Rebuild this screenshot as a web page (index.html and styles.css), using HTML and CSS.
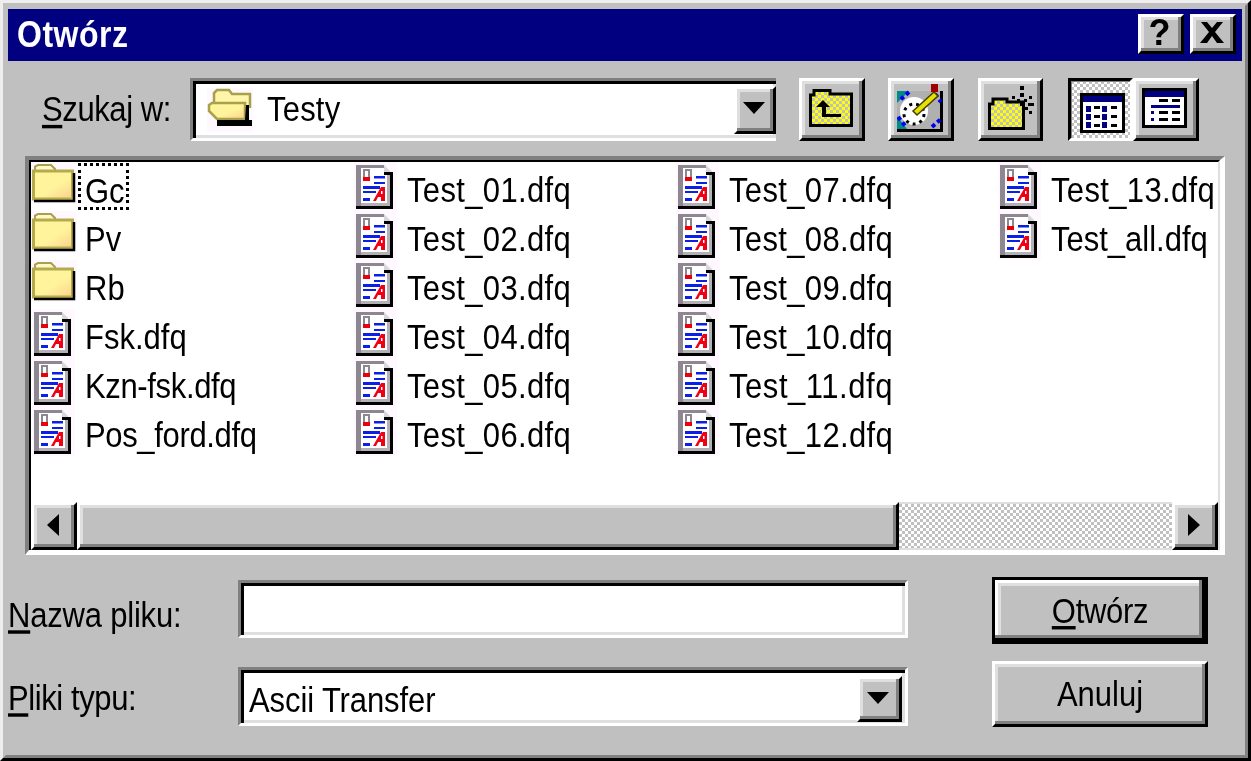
FILE: index.html
```html
<!DOCTYPE html>
<html lang="pl">
<head>
<meta charset="utf-8">
<title>Otwórz</title>
<link rel="stylesheet" href="styles.css">
</head>
<body>
<svg class="defs" width="0" height="0" aria-hidden="true">
  <defs>
    <pattern id="yel" width="6" height="6" patternUnits="userSpaceOnUse">
      <rect width="6" height="6" fill="#ffff00"/><rect width="3" height="3" fill="#c0c0c0"/><rect x="3" y="3" width="3" height="3" fill="#c0c0c0"/>
    </pattern>
    <linearGradient id="fold" x1="0.25" y1="0.15" x2="1" y2="1">
      <stop offset="0.45" stop-color="#fff49c"/><stop offset="1" stop-color="#fbcf8e"/>
    </linearGradient>
    <symbol id="folder" viewBox="0 0 54 49">
      <rect x="0" y="0" width="46" height="42" fill="#fff8ff"/>
      <path d="M4 9V4.500L7 3H20L24 7V9Z" fill="#fff8c8" stroke="#a8a04a" stroke-width="2"/>
      <rect x="2.500" y="9" width="39" height="28" fill="url(#fold)" stroke="#b3ab4e" stroke-width="3"/>
      <path d="M43 11V39H3" fill="none" stroke="#000" stroke-width="2.500"/>
    </symbol>
    <symbol id="doc" viewBox="0 0 54 49">
      <rect x="1" y="0" width="43" height="49" fill="#fff8ff"/>
      <g transform="translate(3 2)">
        <path d="M5 4H28L34 10V42H5Z" fill="#fff"/>
        <path d="M0 1H28V4H5V42H0Z" fill="#8c8790"/>
        <path d="M28 1L34 7V9H28Z" fill="#d8d8d8"/>
        <path d="M31 9H34V39H31ZM5 39H34V42H5Z" fill="#b4b0b8"/>
        <path d="M28 8H37V45H0V42H34V11H28Z" fill="#000"/>
        <rect x="7" y="5" width="7" height="12" fill="#8c8790"/>
        <rect x="9" y="7" width="3" height="6" fill="#fff"/>
        <rect x="7" y="13" width="7" height="4" fill="#e8000c"/>
        <path d="M18 12H29V14.500H18ZM18 18H29V20H18ZM7 22H24V25H7ZM7 27H20V29H7ZM7 34H14V37H7Z" fill="#0a20e8"/>
        <path d="M17 37L25 23H29V37H25V33H22L20 37Z" fill="#f00014"/>
        <rect x="25" y="27" width="1.500" height="3" fill="#fff"/>
      </g>
    </symbol>
    <g id="win-base">
      <rect x="1.500" y="1.500" width="42" height="37" fill="#fff" stroke="#000" stroke-width="3"/>
      <rect x="3" y="3" width="39" height="6" fill="#000080"/>
    </g>
  </defs>
</svg>

<div class="dialog">
  <div class="frame">
    <header class="titlebar">
      <span class="txt title">Otwórz</span>
      <div class="title-btns">
        <button class="bevel tbtn help">?</button>
        <button class="bevel tbtn">
          <svg width="24" height="21" viewBox="0 0 24 21"><path d="M1 0H7L12 6L17 0H23L15 10L24 21H17L12 14L7 21H0L9 10Z" fill="#000"/></svg>
        </button>
      </div>
    </header>

    <div class="toolbar">
      <label class="label look-label"><span class="txt raised"><u>S</u>zukaj w:</span></label>
      <div class="combo look-combo">
        <svg class="open-folder" width="46" height="44" viewBox="0 0 46 44">
          <rect width="46" height="44" fill="#fff8ff"/>
          <path d="M7 16V5L10 2H22L25 6H43V20" fill="#fff6ac" stroke="#a8a04a" stroke-width="2.500"/>
          <path d="M2 17L5 15H38V31H10L2 23Z" fill="url(#fold)" stroke="#a8a04a" stroke-width="2.500"/>
          <path d="M39 17H42V32H45V38H10V32H38Z" fill="#000"/>
        </svg>
        <span class="combo-text"><span class="txt raised">Testy</span></span>
        <button class="bevel drop"><span class="tri-down"></span></button>
      </div>

      <button class="bevel tool tool-up">
        <svg width="44" height="38" viewBox="0 0 44 38">
          <path d="M3 6H1.500V36.500H42.500V5H21V1.500H5V6Z" fill="url(#yel)" stroke="#000" stroke-width="3"/>
          <path d="M14 11L21 18H17V25H32V28H13V18H7Z" fill="#000"/>
        </svg>
      </button>
      <button class="bevel tool tool-map">
        <svg width="46" height="48" viewBox="0 0 46 48">
          <rect x="0" y="7" width="46" height="41" fill="#000"/>
          <rect x="0" y="7" width="43" height="38" fill="#b0b0b0"/>
          <path d="M0 7H12L0 19ZM0 32L10 45H0Z" fill="#008a8a"/>
          <path d="M12 8L2 17M1 33L9 43M35 43L44 35M38 10L44 18" stroke="#0000f0" stroke-width="4" stroke-dasharray="4 3"/>
          <circle cx="17" cy="27" r="14" fill="#fff"/>
          <circle cx="17" cy="30" r="10" fill="none" stroke="#000" stroke-width="3" stroke-dasharray="3 4"/>
          <path d="M16 27L37 8L41 12L20 31Z" fill="#e8e000" stroke="#404000" stroke-width="1.500"/>
          <rect x="34" y="0" width="7" height="8" fill="#a00000"/>
        </svg>
      </button>
      <button class="bevel tool tool-new">
        <svg width="46" height="44" viewBox="0 0 46 44">
          <path d="M3 18H1.500V42.500H35.500V16H19V13H5V18Z" fill="url(#yel)" stroke="#000" stroke-width="3"/>
          <path d="M32 0H36V4H32ZM32 7H36V11H32ZM24 10H27V13H24ZM41 10H44V13H41ZM29 13H32V16H29ZM36 13H39V16H36ZM32 16H36V20H32ZM40 17H46V20H40ZM37 21H40V24H37ZM41 25H44V28H41Z" fill="#000"/>
        </svg>
      </button>
      <button class="tool tool-pressed">
        <svg width="45" height="40" viewBox="0 0 45 40">
          <use href="#win-base"/>
          <path d="M6 13H11V19H6ZM22 13H27V19H22ZM6 21H11V27H6ZM22 21H27V27H22ZM6 29H11V35H6ZM22 29H27V35H22Z" fill="#000080"/>
          <path d="M14 13H20V16H14ZM31 13H37V16H31ZM14 22H20V25H14ZM31 22H37V25H31ZM14 31H20V34H14ZM31 31H37V34H31Z" fill="#000"/>
        </svg>
      </button>
      <button class="bevel tool tool-details">
        <svg width="45" height="40" viewBox="0 0 45 40">
          <use href="#win-base"/>
          <path d="M17 11H26V14H17ZM30 11H38V14H30ZM17 23H26V26H17ZM30 23H38V26H30ZM17 30H26V33H17ZM30 30H38V33H30Z" fill="#000"/>
          <path d="M9 17H38V20H9ZM9 23H12V26H9ZM9 30H12V33H9Z" fill="#000080"/>
        </svg>
      </button>
    </div>

    <div class="listbox">
      <div class="list-inner">
        <div class="files">
          <div class="item"><svg class="ico"><use href="#folder"/></svg><span class="focus"><span class="txt">Gc</span></span></div>
          <div class="item"><svg class="ico"><use href="#folder"/></svg><span class="txt">Pv</span></div>
          <div class="item"><svg class="ico"><use href="#folder"/></svg><span class="txt">Rb</span></div>
          <div class="item"><svg class="ico"><use href="#doc"/></svg><span class="txt">Fsk.dfq</span></div>
          <div class="item"><svg class="ico"><use href="#doc"/></svg><span class="txt tight">Kzn-fsk.dfq</span></div>
          <div class="item"><svg class="ico"><use href="#doc"/></svg><span class="txt tight">Pos_ford.dfq</span></div>
          <div class="item"><svg class="ico"><use href="#doc"/></svg><span class="txt wide">Test_01.dfq</span></div>
          <div class="item"><svg class="ico"><use href="#doc"/></svg><span class="txt wide">Test_02.dfq</span></div>
          <div class="item"><svg class="ico"><use href="#doc"/></svg><span class="txt wide">Test_03.dfq</span></div>
          <div class="item"><svg class="ico"><use href="#doc"/></svg><span class="txt wide">Test_04.dfq</span></div>
          <div class="item"><svg class="ico"><use href="#doc"/></svg><span class="txt wide">Test_05.dfq</span></div>
          <div class="item"><svg class="ico"><use href="#doc"/></svg><span class="txt wide">Test_06.dfq</span></div>
          <div class="item"><svg class="ico"><use href="#doc"/></svg><span class="txt wide">Test_07.dfq</span></div>
          <div class="item"><svg class="ico"><use href="#doc"/></svg><span class="txt wide">Test_08.dfq</span></div>
          <div class="item"><svg class="ico"><use href="#doc"/></svg><span class="txt wide">Test_09.dfq</span></div>
          <div class="item"><svg class="ico"><use href="#doc"/></svg><span class="txt wide">Test_10.dfq</span></div>
          <div class="item"><svg class="ico"><use href="#doc"/></svg><span class="txt wider">Test_11.dfq</span></div>
          <div class="item"><svg class="ico"><use href="#doc"/></svg><span class="txt wide">Test_12.dfq</span></div>
          <div class="item"><svg class="ico"><use href="#doc"/></svg><span class="txt wide">Test_13.dfq</span></div>
          <div class="item"><svg class="ico"><use href="#doc"/></svg><span class="txt">Test_all.dfq</span></div>
        </div>
        <div class="scrollbar">
          <button class="bevel sbtn"><span class="tri-left"></span></button>
          <div class="bevel thumb"></div>
          <div class="track"></div>
          <button class="bevel sbtn"><span class="tri-right"></span></button>
        </div>
      </div>
    </div>

    <div class="form">
      <label class="label form-label name-label"><span class="txt"><u>N</u>azwa pliku:</span></label>
      <div class="field name-field"></div>
      <button class="bevel action default"><span class="txt otw"><u>O</u>twórz</span></button>

      <label class="label form-label type-label"><span class="txt"><u>P</u>liki typu:</span></label>
      <div class="field type-field">
        <span class="txt type-text">Ascii Transfer</span>
        <button class="bevel drop type-drop"><span class="tri-down"></span></button>
      </div>
      <button class="bevel action"><span class="txt anu">Anuluj</span></button>
    </div>
  </div>
</div>
</body>
</html>
```

FILE: styles.css
```css
* { box-sizing: border-box; }
html, body { margin: 0; padding: 0; }
body {
  width: 1251px;
  height: 761px;
  overflow: hidden;
  background: #c0c0c0;
  font-family: "Liberation Sans", Arial, sans-serif;
  font-size: 31px;
  color: #000;
}
.defs { position: absolute; width: 0; height: 0; }
button {
  font: inherit;
  color: inherit;
  padding: 0;
  margin: 0;
  background: #c0c0c0;
  display: flex;
  align-items: center;
  justify-content: center;
}
u { text-decoration-thickness: 3px; text-underline-offset: 3px; }

/* upscaled bitmap font: taller than Arial metrics */
.txt {
  display: inline-block;
  padding-top: 7px;
  transform: scaleY(1.14);
  white-space: nowrap;
}
.raised { padding-top: 1px; }
.wide { letter-spacing: 0.35px; }
.wider { letter-spacing: 0.55px; }
.tight { letter-spacing: -0.35px; }

.bevel {
  border: 3px solid;
  border-color: #fff #000 #000 #fff;
  box-shadow: inset -3px -3px 0 #808080, inset 3px 3px 0 #dfdfdf;
  background: #c0c0c0;
}

.dialog {
  width: 1251px;
  height: 761px;
  border: 3px solid;
  border-color: #eeeeee #000 #000 #eeeeee;
  filter: blur(0.5px);
}
.frame {
  height: 755px;
  border: 3px solid;
  border-color: #c0c0c0 #808080 #808080 #c0c0c0;
  padding: 3px 3px 0 2px;
}

.titlebar {
  height: 52px;
  background: #000080;
  display: flex;
  align-items: center;
  justify-content: space-between;
  padding: 0 6px 2px 9px;
}
.title { color: #fff; font-weight: 700; font-size: 32px; letter-spacing: 0.5px; padding-top: 1px; }
.title-btns { display: flex; gap: 6px; }
.tbtn { width: 46px; height: 40px; padding: 0 3px 3px 0; }
.help { font-weight: 700; font-size: 36px; line-height: 1; }

.toolbar {
  display: flex;
  align-items: center;
  height: 63px;
  margin-top: 17px;
  padding-left: 34px;
}
.label { white-space: nowrap; }
.look-label { width: 148px; letter-spacing: -0.4px; }

.combo, .field {
  border: 3px solid;
  border-color: #808080 #fff #fff #808080;
  box-shadow: inset 3px 3px 0 #000, inset -3px -3px 0 #dfdfdf;
  background: #fff;
  display: flex;
  align-items: center;
}
.look-combo {
  width: 586px;
  height: 63px;
  padding-left: 14px;
  border-right: 0;
}
.open-folder { flex: none; margin-right: 14px; }
.combo-text { flex: 1; letter-spacing: 0.2px; }
.drop { width: 42px; height: 48px; flex: none; }
.tri-down {
  display: block;
  width: 0; height: 0;
  border-left: 11px solid transparent;
  border-right: 11px solid transparent;
  border-top: 12px solid #000;
  margin: 0 3px 3px 0;
}
.tri-left, .tri-right {
  display: block;
  width: 0; height: 0;
  border-top: 11px solid transparent;
  border-bottom: 11px solid transparent;
  margin: 0 3px 3px 0;
}
.tri-left { border-right: 12px solid #000; }
.tri-right { border-left: 12px solid #000; }

.tool { height: 63px; flex: none; padding: 0 3px 3px 0; }
.tool-up { width: 66px; margin-left: 23px; }
.tool-map { width: 66px; margin-left: 23px; padding: 0 3px 4px 0; }
.tool-new { width: 65px; margin-left: 24px; padding: 0 0 3px 0; }
.tool-pressed {
  width: 65px;
  margin-left: 25px;
  border: 3px solid;
  border-color: #000 #fff #fff #000;
  box-shadow: inset 1px 1px 0 #808080;
  background: repeating-conic-gradient(#ffffff 0 25%, #c0c0c0 0 50%) 0 0 / 6px 6px;
  padding: 6px 0 0 3px;
}
.tool-details { width: 66px; }

.listbox {
  width: 1200px;
  height: 399px;
  margin: 15px 0 0 17px;
  border-style: solid;
  border-width: 4px 5px 5px 4px;
  border-color: #808080 #fff #fff #808080;
}
.list-inner {
  height: 390px;
  border-style: solid;
  border-width: 2px 2px 0 2px;
  border-color: #000 #dfdfdf #dfdfdf #000;
  background: #fff;
  display: flex;
  flex-direction: column;
}
.files {
  height: 340px;
  overflow: hidden;
  display: grid;
  grid-auto-flow: column;
  grid-template-rows: repeat(6, 49px);
  grid-template-columns: repeat(3, 322px) 1fr;
  align-content: start;
}
.item { display: flex; align-items: center; white-space: nowrap; min-width: 0; }
.ico { width: 54px; height: 49px; flex: none; }
.focus {
  display: block;
  border: 3px dotted #000;
  margin-left: -7px;
  padding: 0 1px 0 4px;
  height: 47px;
  line-height: 36px;
}
.scrollbar {
  flex: 1;
  display: flex;
  align-items: stretch;
  background: #c0c0c0;
}
.sbtn { width: 46px; flex: none; }
.thumb { width: 822px; flex: none; }
.track {
  flex: 1;
  background: repeating-conic-gradient(#ffffff 0 25%, #c0c0c0 0 50%) 0 0 / 6px 6px;
  border-top: 2px solid #dfdfdf;
  border-bottom: 2px solid #dfdfdf;
}

.form {
  display: grid;
  grid-template-columns: 230px 670px 84px 216px;
  grid-template-rows: 67px 66px;
  row-gap: 17px;
  margin-top: 22px;
}
.form-label { align-self: center; padding-top: 1px; }
.name-label { letter-spacing: -0.2px; }
.type-label { letter-spacing: -0.4px; padding-top: 0; }
.name-field { height: 58px; margin-top: 3px; }
.type-field { height: 59px; margin-top: 6px; padding-left: 8px; justify-content: space-between; }
.type-text { letter-spacing: -0.1px; }
.type-drop { width: 45px; height: 46px; margin-top: 5px; margin-right: 3px; }
.action { grid-column: 4; height: 66px; padding: 0 3px 3px 0; }
.default {
  height: 67px;
  border: 3px solid #000;
  box-shadow: inset -3px -3px 0 #000, inset -6px -6px 0 #808080, inset 3px 3px 0 #fff, inset 6px 6px 0 #dfdfdf;
}
.otw { margin-left: 3px; letter-spacing: -0.3px; padding-top: 3px; }
.anu { margin-left: 3px; padding-top: 3px; }
```
